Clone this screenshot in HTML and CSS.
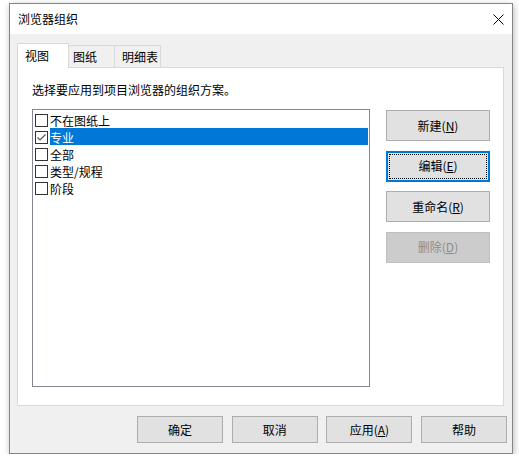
FILE: index.html
```html
<!DOCTYPE html>
<html lang="zh">
<head>
<meta charset="utf-8">
<title>浏览器组织</title>
<link rel="stylesheet" href="styles.css">
</head>
<body>
<div class="window">
  <div class="titlebar">
    <span class="title">浏览器组织</span>
    <svg class="close" width="11" height="11" viewBox="0 0 11 11"><path d="M0.5 0.5 L10.5 10.5 M10.5 0.5 L0.5 10.5" stroke="#000" stroke-width="1" fill="none"/></svg>
  </div>
  <div class="client">
    <div class="tabs">
      <div class="tab active">视图</div>
      <div class="tab t2">图纸</div>
      <div class="tab t3">明细表</div>
    </div>
    <div class="panel">
      <p class="hint">选择要应用到项目浏览器的组织方案。</p>
      <div class="panel-row">
        <div class="listbox">
          <div class="row"><span class="cb"></span><span class="label">不在图纸上</span></div>
          <div class="row selected"><span class="cb"><svg width="11" height="11" viewBox="0 0 11 11"><path d="M1.5 5.5 L4 8 L9.5 2.5" stroke="#555" stroke-width="1.2" fill="none"/></svg></span><span class="label">专业</span></div>
          <div class="row"><span class="cb"></span><span class="label">全部</span></div>
          <div class="row"><span class="cb"></span><span class="label">类型/规程</span></div>
          <div class="row"><span class="cb"></span><span class="label">阶段</span></div>
        </div>
        <div class="side-buttons">
          <button class="btn side">新建(<u>N</u>)</button>
          <button class="btn side focused">编辑(<u>E</u>)</button>
          <button class="btn side">重命名(<u>R</u>)</button>
          <button class="btn side disabled">删除(<u>D</u>)</button>
        </div>
      </div>
    </div>
    <div class="footer">
      <button class="btn foot">确定</button>
      <button class="btn foot">取消</button>
      <button class="btn foot">应用(<u>A</u>)</button>
      <button class="btn foot">帮助</button>
    </div>
  </div>
</div>
</body>
</html>
```
FILE: styles.css
```css
* { box-sizing: border-box; }
html, body {
  margin: 0;
  padding: 0;
  background: #ffffff;
}
body {
  font-family: "Noto Sans CJK SC", "Microsoft YaHei", sans-serif;
  font-size: 12px;
  color: #000;
  padding: 3px 0 0 9px;
}
.window {
  width: 504px;
  height: 451px;
  border: 1px solid #858585;
  background: #f0f0f0;
  box-shadow: 1px 2px 7px rgba(0, 0, 0, 0.28);
  display: flex;
  flex-direction: column;
}
.titlebar {
  height: 30px;
  background: #ffffff;
  display: flex;
  align-items: center;
  justify-content: space-between;
  padding: 0 8px 0 8px;
  flex-shrink: 0;
}
.title {
  line-height: 16px;
  margin-top: -1px;
}
.close {
  display: block;
}
.client {
  flex: 1;
  padding: 9px 8px 10px 7px;
  display: flex;
  flex-direction: column;
}
.tabs {
  height: 24px;
  display: flex;
  align-items: flex-end;
  position: relative;
  z-index: 1;
}
.tab {
  height: 22px;
  line-height: 21px;
  border: 1px solid #d9d9d9;
  border-bottom: none;
  border-left: none;
  background: #f0f0f0;
  padding-left: 4px;
}
.tab.active {
  height: 25px;
  line-height: 24px;
  margin-bottom: -1px;
  width: 52px;
  border-left: 1px solid #d9d9d9;
  background: #ffffff;
  padding-left: 7px;
}
.tab.t2 { width: 46px; }
.tab.t3 { width: 46px; padding-left: 7px; }
.panel {
  height: 339px;
  background: #ffffff;
  border: 1px solid #d9d9d9;
  padding: 14px 0 0 14px;
}
.hint {
  margin: 0;
  line-height: 16px;
}
.panel-row {
  margin-top: 11px;
  display: flex;
  align-items: flex-start;
}
.listbox {
  width: 338px;
  height: 278px;
  border: 1px solid #828790;
  padding-top: 1px;
  padding-right: 1px;
  background: #fff;
}
.row {
  height: 17px;
  display: flex;
  align-items: flex-start;
}
.cb {
  width: 13px;
  height: 13px;
  border: 1px solid #333333;
  margin: 3px 2px 0 2px;
  background: #fff;
  display: flex;
  align-items: center;
  justify-content: center;
  flex-shrink: 0;
}
.cb svg { display: block; }
.label {
  flex: 1;
  height: 17px;
  line-height: 17px;
  padding-top: 1px;
  white-space: nowrap;
}
.row.selected .label {
  background: #0078d7;
  color: #ffffff;
}
.side-buttons {
  margin-left: 16px;
  margin-top: 1px;
  display: flex;
  flex-direction: column;
  gap: 9.67px;
}
.btn {
  font-family: inherit;
  font-size: 12px;
  color: #000;
  background: #e1e1e1;
  border: 1px solid #adadad;
  padding: 0;
  margin: 0;
  line-height: 16px;
}
.btn u { text-underline-offset: 1px; }
.side {
  width: 104px;
  height: 31px;
}
.focused {
  border: 2px solid #0078d7;
  outline: 1px dotted #000;
  outline-offset: -4px;
}
.disabled {
  background: #cccccc;
  border-color: #bfbfbf;
  color: #8d8d8d;
}
.footer {
  margin-top: 10px;
  display: flex;
  justify-content: flex-end;
  gap: 8.67px;
  padding-right: 5px;
  margin-right: -8px;
}
.foot {
  width: 86px;
  height: 27px;
}
```
